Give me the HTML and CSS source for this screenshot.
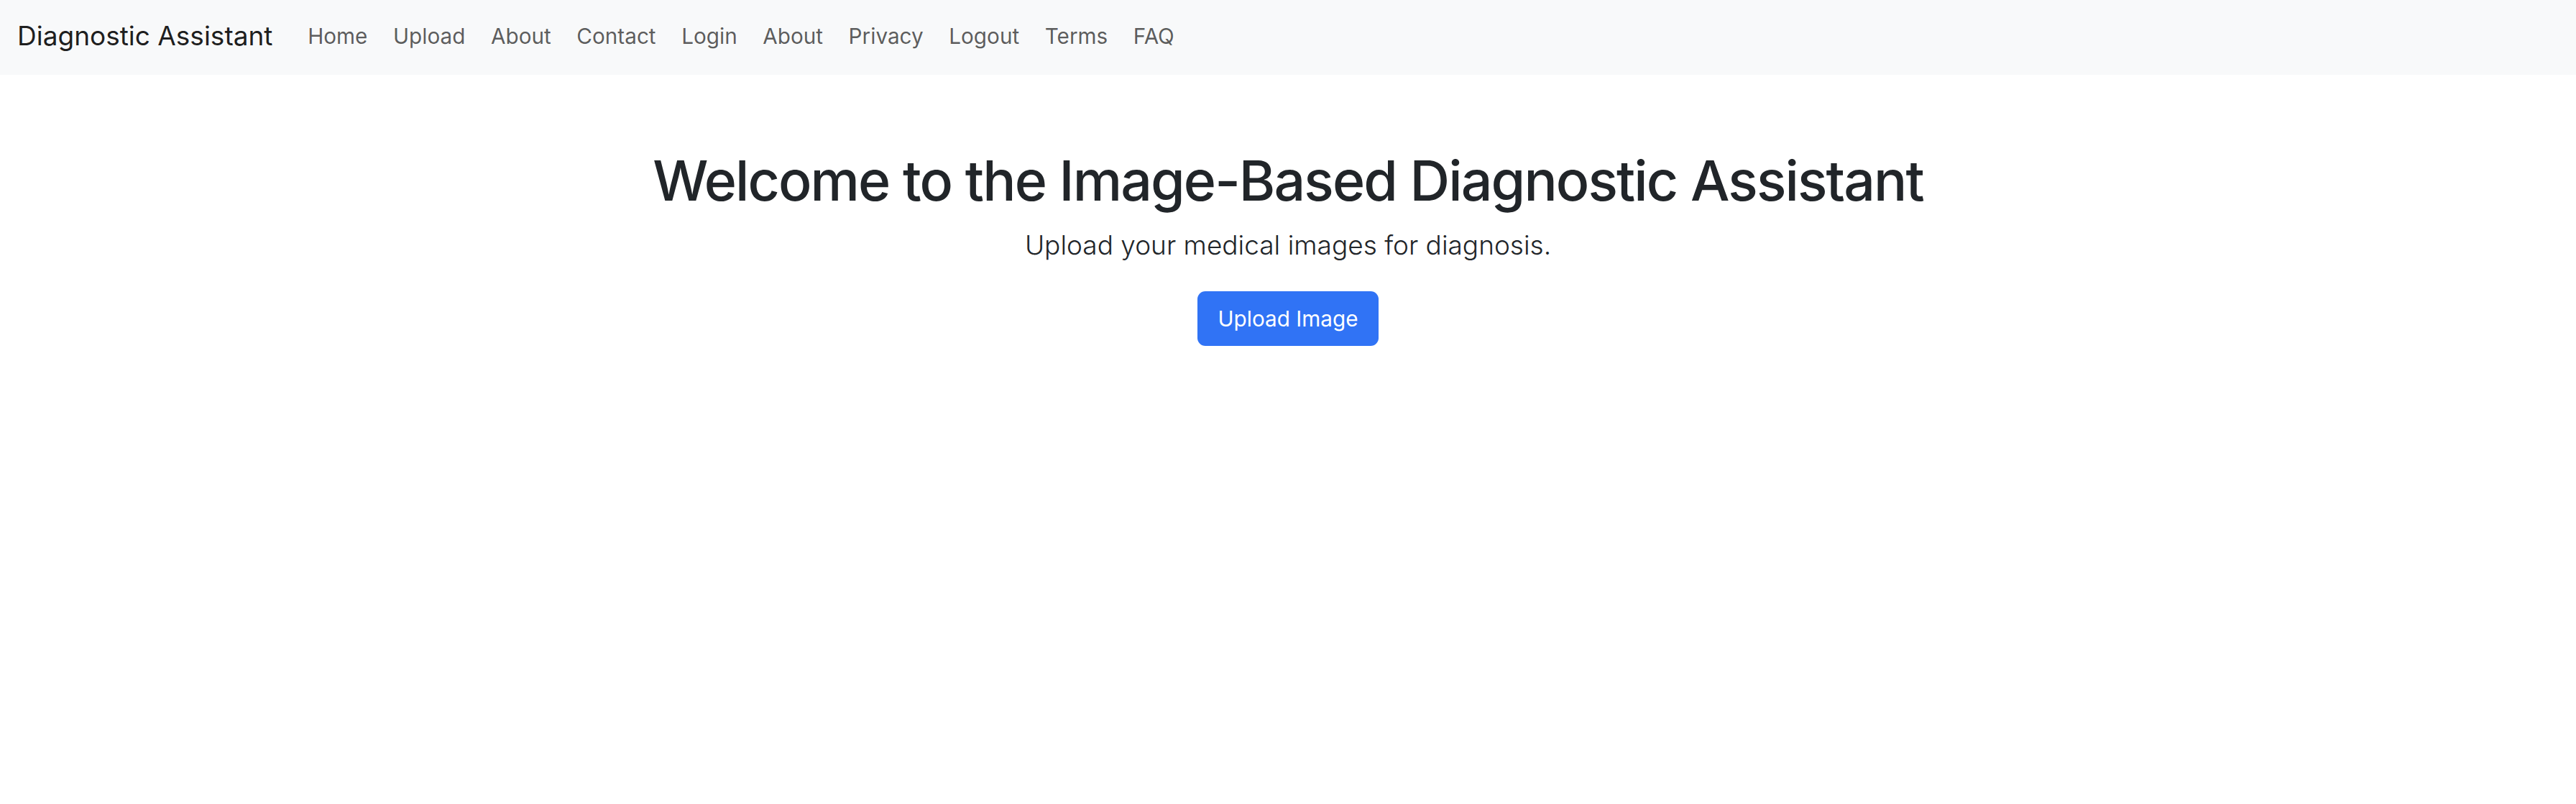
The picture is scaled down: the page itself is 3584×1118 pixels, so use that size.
FILE: index.html
```html
<!DOCTYPE html>
<html lang="en">
<head>
<meta charset="utf-8">
<title>Diagnostic Assistant</title>
<link rel="stylesheet" href="styles.css">
</head>
<body>
<nav class="navbar">
  <a class="brand" href="#">Diagnostic Assistant</a>
  <ul class="nav">
    <li><a class="nav-link" href="#">Home</a></li>
    <li><a class="nav-link" href="#">Upload</a></li>
    <li><a class="nav-link" href="#">About</a></li>
    <li><a class="nav-link" href="#">Contact</a></li>
    <li><a class="nav-link" href="#">Login</a></li>
    <li><a class="nav-link" href="#">About</a></li>
    <li><a class="nav-link" href="#">Privacy</a></li>
    <li><a class="nav-link" href="#">Logout</a></li>
    <li><a class="nav-link" href="#">Terms</a></li>
    <li><a class="nav-link" href="#">FAQ</a></li>
  </ul>
</nav>
<main class="hero">
  <h1 class="title">Welcome to the Image-Based Diagnostic Assistant</h1>
  <p class="lead">Upload your medical images for diagnosis.</p>
  <a class="btn" href="#">Upload Image</a>
</main>
</body>
</html>
```

FILE: styles.css
```css
* { box-sizing: border-box; }
html, body { margin: 0; padding: 0; }
body {
  font-family: Inter, "Noto Sans", sans-serif;
  font-size: 29.7px;
  line-height: 1.5;
  color: #212529;
  background: #fff;
}
.navbar {
  display: flex;
  align-items: center;
  height: 104px;
  padding: 0 22px 4px 24px;
  background: #f8f9fa;
}
.brand {
  font-size: 37px;
  color: rgba(0,0,0,0.9);
  text-decoration: none;
  margin-right: 31px;
}
.nav {
  display: flex;
  list-style: none;
  margin: 0;
  padding: 0;
}
.nav-link {
  display: block;
  padding: 0 17.8px;
  color: rgba(0,0,0,0.65);
  text-decoration: none;
}
.hero {
  display: flex;
  flex-direction: column;
  align-items: center;
  padding-top: 101px;
}
.title {
  margin: 0 0 16px;
  font-size: 77px;
  font-weight: 500;
  line-height: 1.2;
  letter-spacing: -1.9px;
  color: #212529;
}
.lead {
  margin: 0 0 36px;
  font-size: 37px;
  font-weight: 300;
  line-height: 1.5;
}
.btn {
  display: inline-block;
  padding: 15.7px 29px;
  font-size: 29.7px;
  line-height: 1.5;
  color: #fff;
  background: #3073f5;
  border-radius: 11px;
  text-decoration: none;
}
```
